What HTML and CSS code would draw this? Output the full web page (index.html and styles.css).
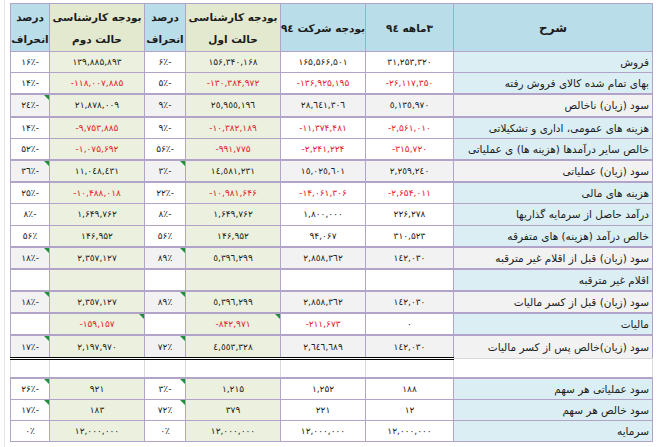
FILE: index.html
```html
<!DOCTYPE html>
<html lang="fa">
<head>
<meta charset="utf-8">
<title>بودجه</title>
<link rel="stylesheet" href="styles.css">
</head>
<body>
<div class="wrap">
<table class="sheet" dir="rtl">
  <colgroup>
    <col class="w-desc"><col class="w-q"><col class="w-co"><col class="w-b1"><col class="w-p1"><col class="w-b2"><col class="w-p2">
  </colgroup>
  <thead>
    <tr class="head">
      <th class="hb big">شرح</th>
      <th class="hb">۳ماهه ٩٤</th>
      <th class="hb">بودجه شرکت ٩٤</th>
      <th class="hg">بودجه کارشناسی<br>حالت اول</th>
      <th class="hb">درصد<br>انحراف</th>
      <th class="hg">بودجه کارشناسی<br>حالت دوم</th>
      <th class="hb">درصد<br>انحراف</th>
    </tr>
  </thead>
  <tbody>
    <tr class="r">
      <td class="d">فروش</td>
      <td class="n">۳۱,۲۵۳,۳۲۰</td>
      <td class="n">۱۶۵,۵۶۶,۵۰۱</td>
      <td class="n g">۱۵۶,۳۴۰,۱۶۸</td>
      <td class="n">۶٪-</td>
      <td class="n g">۱۳۹,۸۸۵,۸۹۳</td>
      <td class="n">۱۶٪-</td>
    </tr>
    <tr class="r">
      <td class="d">بهای تمام شده کالای فروش رفته</td>
      <td class="n red">-۲۶,۱۱۷,۳۵۰</td>
      <td class="n red">-۱۳۶,۹۲۵,۱۹۵</td>
      <td class="n g red">-۱۳۰,۳۸۴,۹۷۲</td>
      <td class="n">۵٪-</td>
      <td class="n g red">-۱۱۸,۰۰۷,۸۸۵</td>
      <td class="n">۱۴٪-</td>
    </tr>
    <tr class="r sum">
      <td class="d">سود (زیان) ناخالص</td>
      <td class="n">٥,١٣٥,٩٧٠</td>
      <td class="n">٢٨,٦٤١,٣٠٦</td>
      <td class="n g">٢٥,٩٥٥,١٩٦</td>
      <td class="n">۹٪-</td>
      <td class="n g">۲۱,۸۷۸,۰۰۹</td>
      <td class="n t">٢٤٪-</td>
    </tr>
    <tr class="r">
      <td class="d">هزینه های عمومی، اداری و تشکیلاتی</td>
      <td class="n red">-۲,۵۶۱,۰۱۰</td>
      <td class="n red">-۱۱,۳۷۴,۴۸۱</td>
      <td class="n g red">-۱۰,۳۸۲,۱۸۹</td>
      <td class="n">۹٪-</td>
      <td class="n g red">-۹,۷۵۳,۸۸۵</td>
      <td class="n">۱۴٪-</td>
    </tr>
    <tr class="r">
      <td class="d">خالص سایر درآمدها (هزینه ها) ی عملیاتی</td>
      <td class="n red">-۳۱۵,۷۲۰</td>
      <td class="n red">-۲,۲۴۱,۲۲۴</td>
      <td class="n g red">-۹۹۱,۷۷۵</td>
      <td class="n">۵۶٪-</td>
      <td class="n g red">-۱,۰۷۵,۶۹۲</td>
      <td class="n">۵۲٪-</td>
    </tr>
    <tr class="r sum">
      <td class="d">سود (زیان) عملیاتی</td>
      <td class="n">٢,٢٥٩,٢٤٠</td>
      <td class="n">١٥,٠٢٥,٦٠١</td>
      <td class="n g">١٤,٥٨١,٢٣١</td>
      <td class="n t">۳٪-</td>
      <td class="n g">١١,٠٤٨,٤٣١</td>
      <td class="n t">٣٦٪-</td>
    </tr>
    <tr class="r">
      <td class="d">هزینه های مالی</td>
      <td class="n red">-۲,۶۵۴,۰۱۱</td>
      <td class="n red">-۱۴,۰۶۱,۳۰۶</td>
      <td class="n g red">-۱۰,۹۸۱,۶۴۶</td>
      <td class="n">۲۲٪-</td>
      <td class="n g red">-۱۰,۴۸۸,۰۱۸</td>
      <td class="n">۲۵٪-</td>
    </tr>
    <tr class="r">
      <td class="d">درآمد حاصل از سرمایه گذاریها</td>
      <td class="n">۲۲۶,۲۷۸</td>
      <td class="n">۱,۸۰۰,۰۰۰</td>
      <td class="n g">۱,۶۴۹,۷۶۲</td>
      <td class="n">۸٪-</td>
      <td class="n g">۱,۶۴۹,۷۶۲</td>
      <td class="n">۸٪-</td>
    </tr>
    <tr class="r">
      <td class="d">خالص درآمد (هزینه) های متفرقه</td>
      <td class="n">۳۱۰,۵۲۳</td>
      <td class="n">۹۴,۰۶۷</td>
      <td class="n g">۱۴۶,۹۵۲</td>
      <td class="n">۵۶٪</td>
      <td class="n g">۱۴۶,۹۵۲</td>
      <td class="n">۵۶٪</td>
    </tr>
    <tr class="r sum">
      <td class="d">سود (زیان) قبل از اقلام غیر مترقبه</td>
      <td class="n">١٤٢,٠٣٠</td>
      <td class="n">٢,٨٥٨,٣٦٢</td>
      <td class="n g">٥,٣٩٦,٢٩٩</td>
      <td class="n t">۸۹٪</td>
      <td class="n g">٢,٣٥٧,١٢٧</td>
      <td class="n t">۱۸٪-</td>
    </tr>
    <tr class="r">
      <td class="d">اقلام غیر مترقبه</td>
      <td class="n"></td>
      <td class="n"></td>
      <td class="n g"></td>
      <td class="n"></td>
      <td class="n g"></td>
      <td class="n"></td>
    </tr>
    <tr class="r sum">
      <td class="d">سود (زیان) قبل از کسر مالیات</td>
      <td class="n">١٤٢,٠٣٠</td>
      <td class="n">٢,٨٥٨,٣٦٢</td>
      <td class="n g">٥,٣٩٦,٢٩٩</td>
      <td class="n t">۸۹٪</td>
      <td class="n g">٢,٣٥٧,١٢٧</td>
      <td class="n t">۱۸٪-</td>
    </tr>
    <tr class="r">
      <td class="d">مالیات</td>
      <td class="n">۰</td>
      <td class="n red">-۲۱۱,۶۷۳</td>
      <td class="n g red t">-۸۴۲,۹۷۱</td>
      <td class="n"></td>
      <td class="n g red t">-۱۵۹,۱۵۷</td>
      <td class="n"></td>
    </tr>
    <tr class="r sum last">
      <td class="d">سود (زیان)خالص پس از کسر مالیات</td>
      <td class="n">١٤٢,٠٣٠</td>
      <td class="n">٢,٦٤٦,٦٨٩</td>
      <td class="n g">٤,٥٥٣,٣٢٨</td>
      <td class="n t">۷۲٪</td>
      <td class="n g">٢,١٩٧,٩٧٠</td>
      <td class="n t">۱۷٪-</td>
    </tr>
    <tr class="blank">
      <td></td><td></td><td></td><td></td><td></td><td></td><td></td>
    </tr>
    <tr class="r low first">
      <td class="d">سود عملیاتی هر سهم</td>
      <td class="n">۱۸۸</td>
      <td class="n">۱,۲۵۲</td>
      <td class="n g">۱,۲۱۵</td>
      <td class="n t">۳٪-</td>
      <td class="n g">۹۲۱</td>
      <td class="n t">۲۶٪-</td>
    </tr>
    <tr class="r low">
      <td class="d">سود خالص هر سهم</td>
      <td class="n">۱۲</td>
      <td class="n">۲۲۱</td>
      <td class="n g">۳۷۹</td>
      <td class="n t">۷۲٪</td>
      <td class="n g">۱۸۳</td>
      <td class="n t">۱۷٪-</td>
    </tr>
    <tr class="r low">
      <td class="d">سرمایه</td>
      <td class="n">۱۲,۰۰۰,۰۰۰</td>
      <td class="n">۱۲,۰۰۰,۰۰۰</td>
      <td class="n g">۱۲,۰۰۰,۰۰۰</td>
      <td class="n">۰٪</td>
      <td class="n g">۱۲,۰۰۰,۰۰۰</td>
      <td class="n">۰٪</td>
    </tr>
  </tbody>
</table>
</div>
</body>
</html>
```
FILE: styles.css
```css
html, body {
  margin: 0;
  background: #ffffff;
}

.wrap {
  border-left: 1px solid #e6e6e6;
  margin-left: 4px;
  height: 447px;
  box-sizing: border-box;
  padding: 3px 0 0 5px;
}

.sheet {
  border-collapse: collapse;
  table-layout: fixed;
  width: 643px;
  direction: rtl;
  font-family: "DejaVu Sans", sans-serif;
  color: #1c1c1c;
}

.w-desc { width: 199px; }
.w-q { width: 88px; }
.w-co { width: 85px; }
.w-b1 { width: 95px; }
.w-p1 { width: 41px; }
.w-b2 { width: 95px; }
.w-p2 { width: 39px; }

.sheet th,
.sheet td {
  border: 1px solid #b1a4c8;
  padding: 0;
  overflow: hidden;
  white-space: nowrap;
}

.head th {
  height: 47px;
  font-size: 10.5px;
  font-weight: bold;
  line-height: 22px;
  text-align: center;
  letter-spacing: -0.2px;
}

.head th.big { font-size: 12px; }

.hb { background: #b9dde9; }
.hg { background: #e3e9cf; }

.r td {
  height: 20.2px;
  position: relative;
}

.d {
  background: #daeef3;
  text-align: right;
  font-size: 10.5px;
  padding-right: 3px !important;
}

.n {
  text-align: center;
  font-size: 9px;
  direction: ltr;
  unicode-bidi: bidi-override;
  background: #ffffff;
}

.n.g { background: #ebf1de; }

.red { color: #e4202c; }

.sum td { background: #f2f2f2; border-top-width: 2px; border-bottom-width: 2px; }
.sum td.g { background: #ebf1de; }

.last td { border-bottom: 3px double #000000; }
.last td.d { border-bottom: 1px solid #d9d9d9; }

.blank td {
  height: 17px;
  background: #ffffff;
  border-color: #dadada;
  border-top: none;
}

.low td { height: 20.2px; }
.first td { border-top-width: 2px; }

.t::after {
  content: "";
  position: absolute;
  top: 0;
  right: 0;
  width: 0;
  height: 0;
  border-top: 5px solid #1e8f3e;
  border-left: 5px solid transparent;
}
```
